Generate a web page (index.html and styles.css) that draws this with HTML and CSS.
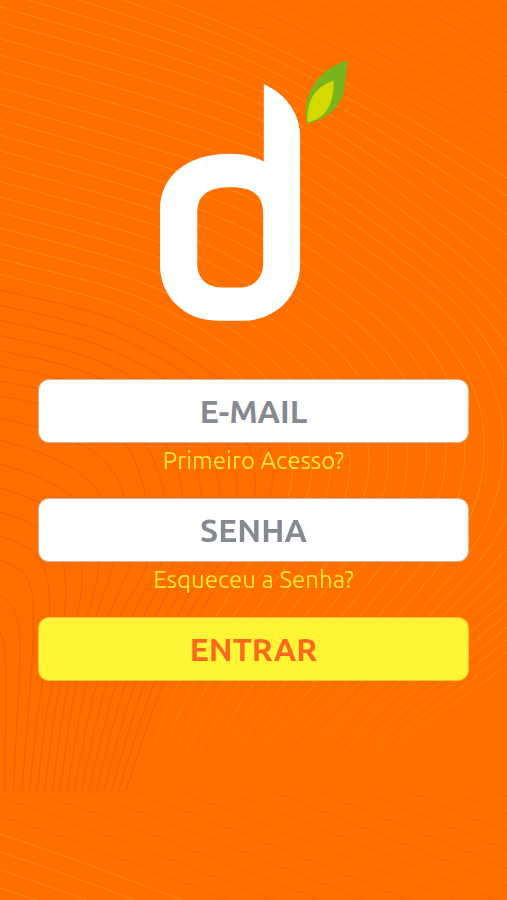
FILE: index.html
```
<!DOCTYPE html>
<html lang="pt-BR">
<head>
<meta charset="utf-8">
<meta name="viewport" content="width=device-width, initial-scale=1">
<title>Entrar</title>
<link rel="stylesheet" href="styles.css">
</head>
<body>
<svg class="backdrop" viewBox="0 0 507 900" preserveAspectRatio="xMidYMid slice" aria-hidden="true">
  <defs>
    <linearGradient id="fade" x1="0" y1="0" x2="0" y2="1">
      <stop offset="0.7" stop-color="#fff"/>
      <stop offset="0.88" stop-color="#fff" stop-opacity="0.15"/>
    </linearGradient>
    <mask id="fadeMask" maskUnits="userSpaceOnUse" x="0" y="0" width="507" height="900">
      <rect width="507" height="900" fill="url(#fade)"/>
    </mask>
    <clipPath id="upper"><rect width="507" height="791"/></clipPath>
    <clipPath id="lower"><rect y="791" width="507" height="109"/></clipPath>
  </defs>
  <g clip-path="url(#upper)">
    <g id="darkLines" class="line-dark"></g>
    <g id="faintLines" class="line-faint"></g>
    <g id="lightLines" class="line-light" mask="url(#fadeMask)"></g>
  </g>
  <g clip-path="url(#lower)">
    <g id="lowerFaint" class="line-faint"></g>
    <g id="lowerLight" class="line-light"></g>
  </g>
</svg>
<main class="login">
  <svg class="logo" viewBox="60 60 565 783" role="img" aria-label="d">
    <path fill="#fff" fill-rule="evenodd" d="M372 132C438 159 481 222 481 285V672C481 772 405 843 310 843H232C135 843 60 772 60 675V510C60 405 145 341 270 341C312 341 345 350 372 364ZM272 442C205 442 172 465 172 520V672C172 715 200 743 245 743H298C342 743 370 715 370 672V520C370 465 338 442 272 442Z"/>
    <path fill="#7ab51d" d="M624 60C550 80 483 150 501 251C570 240 610 190 615 140C617 110 622 85 624 60Z"/>
    <path fill="#d4d900" d="M582 122C530 138 500 175 503 247C555 236 582 200 582 122Z"/>
  </svg>
  <form class="form">
    <input class="field" type="email" placeholder="E-MAIL" aria-label="E-mail">
    <a class="link" href="#">Primeiro Acesso?</a>
    <input class="field" type="password" placeholder="SENHA" aria-label="Senha">
    <a class="link" href="#">Esqueceu a Senha?</a>
    <button class="submit" type="submit">ENTRAR</button>
  </form>
</main>
<script src="lines.js"></script>
</body>
</html>
```
FILE: styles.css
```
* {
  box-sizing: border-box;
}

body {
  margin: 0;
  min-height: 100vh;
  background: #ff6f00;
  font-family: Ubuntu, "Noto Sans", sans-serif;
}

.backdrop {
  position: fixed;
  inset: 0;
  z-index: -1;
  width: 100%;
  height: 100%;
  fill: none;
}

.line-dark {
  stroke: #e85f00;
  stroke-opacity: 0.9;
}

.line-faint {
  stroke: #f56600;
  stroke-width: 2;
  stroke-opacity: 0.5;
}

.line-light {
  stroke: #ff8a0c;
}

.login {
  display: flex;
  flex-direction: column;
  align-items: center;
  gap: 58px;
  padding: 60px 38px;
}

.logo {
  width: 188px;
  height: 261px;
}

.form {
  display: flex;
  flex-direction: column;
  align-items: center;
  width: 100%;
}

.field,
.submit {
  width: 100%;
  height: 64px;
  padding: 0 16px;
  border: 1px solid #e3b08c;
  border-radius: 11px;
  font-family: inherit;
  font-size: 32px;
  font-weight: 700;
  text-align: center;
}

.field {
  background: #fff;
  color: #858a91;
}

.field::placeholder {
  color: #858a91;
  opacity: 1;
}

.link {
  margin-bottom: 19px;
  color: #ffe52e;
  font-size: 24px;
  line-height: 36px;
  text-decoration: none;
}

.submit {
  border-color: #f5c030;
  background: #fff435;
  color: #fb6a1c;
}
```
FILE: lines.js
```
// Contour pattern: each key curve has the same number of points;
// the curves between two keys are interpolated.
const keys = [
  [0, [[0,632],[2,638],[4,645],[5,655],[6,670],[6,690],[6,720],[5,750],[5,791]]],
  [2, [[0,560],[14,566],[25,575],[31,590],[33,605],[33,640],[30,690],[26,740],[22,791]]],
  [7, [[0,440],[38,452],[75,470],[100,495],[113,530],[113,565],[96,617],[75,690],[60,791]]],
  [9, [[0,396],[60,410],[120,440],[140,475],[148,520],[147,565],[120,617],[95,690],[74,791]]],
  [16, [[0,290],[110,318],[200,365],[255,420],[273,470],[260,520],[220,580],[165,680],[126,791]]],
  [28, [[0,104],[254,183],[405,278],[475,350],[503,430],[488,520],[430,600],[340,690],[250,791]]],
  [33, [[0,22],[254,101],[430,216],[540,318],[592,430],[565,540],[475,628],[385,705],[290,791]]],
  [38, [[0,-55],[254,37],[507,178],[620,270],[680,430],[640,560],[520,655],[430,720],[330,791]]]
];

function curveAt(t) {
  let i = 0;
  while (i < keys.length - 2 && t > keys[i + 1][0]) i++;
  const [t0, a] = keys[i];
  const [t1, b] = keys[i + 1];
  const f = (t - t0) / (t1 - t0);
  return a.map((p, n) => [p[0] + (b[n][0] - p[0]) * f, p[1] + (b[n][1] - p[1]) * f]);
}

function smooth(pts) {
  let d = "M" + pts[0].join(" ");
  for (let i = 0; i < pts.length - 1; i++) {
    const p0 = pts[i - 1] || pts[i];
    const p1 = pts[i];
    const p2 = pts[i + 1];
    const p3 = pts[i + 2] || p2;
    d += "C" + [
      p1[0] + (p2[0] - p0[0]) / 6, p1[1] + (p2[1] - p0[1]) / 6,
      p2[0] - (p3[0] - p1[0]) / 6, p2[1] - (p3[1] - p1[1]) / 6,
      p2[0], p2[1]
    ].join(" ");
  }
  return d;
}

function draw(group, d) {
  const path = document.createElementNS("http://www.w3.org/2000/svg", "path");
  path.setAttribute("d", d);
  document.getElementById(group).appendChild(path);
}

for (let t = 0; t <= 16; t++) draw("darkLines", smooth(curveAt(t)));
for (let t = 17; t <= 38; t++) draw("lightLines", smooth(curveAt(t)));
for (let k = 1; k < 14; k++) draw("faintLines", `M0 ${-55 - k * 17}Q254 ${22 - k * 17} 507 ${178 - k * 17}`);
for (let k = 0; k < 4; k++) draw("lowerLight", `M0 ${834 + k * 18}Q120 ${872 + k * 18} 507 ${1030 + k * 18}`);
for (let k = 1; k < 14; k++) draw("lowerFaint", `M0 ${834 - k * 18}Q120 ${872 - k * 18} 507 ${1030 - k * 18}`);
```
